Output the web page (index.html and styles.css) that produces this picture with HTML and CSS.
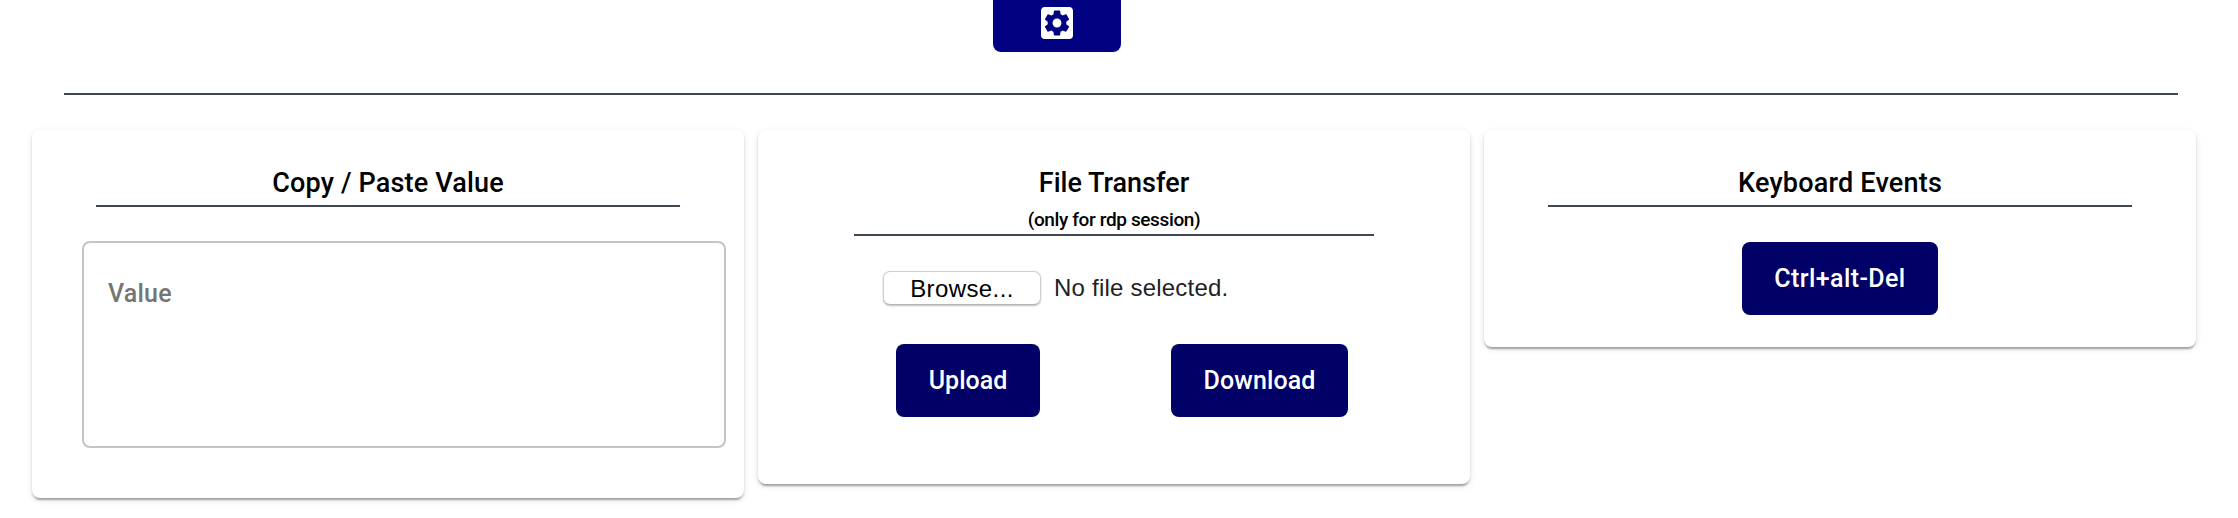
FILE: index.html
```
<!DOCTYPE html>
<html lang="en">
<head>
<meta charset="utf-8">
<title>Remote session</title>
<link rel="stylesheet" href="styles.css">
</head>
<body>
<header class="toolbar">
  <button class="settings" aria-label="Settings">
    <svg viewBox="3 3 18 18" width="32" height="32"><path fill="#fff" d="M12 9.5a2.5 2.5 0 1 0 0 5a2.5 2.5 0 0 0 0-5zm7-6.5H5c-1.11 0-2 .9-2 2v14c0 1.1.89 2 2 2h14c1.11 0 2-.9 2-2V5c0-1.1-.89-2-2-2zm-1.75 9c0 .23-.02.46-.05.68l1.48 1.16c.13.11.17.3.08.45l-1.4 2.42c-.09.15-.27.21-.43.15l-1.74-.7c-.36.28-.76.51-1.18.69l-.26 1.85c-.03.17-.18.3-.35.3h-2.8c-.17 0-.32-.13-.35-.29l-.26-1.85c-.43-.18-.82-.41-1.18-.69l-1.74.7c-.16.06-.34 0-.43-.15l-1.4-2.42c-.09-.15-.05-.34.08-.45l1.48-1.16c-.03-.23-.05-.46-.05-.69 0-.23.02-.46.05-.68l-1.48-1.16c-.13-.11-.17-.3-.08-.45l1.4-2.42c.09-.15.27-.21.43-.15l1.74.7c.36-.28.76-.51 1.18-.69l.26-1.85c.03-.17.18-.3.35-.3h2.8c.17 0 .32.13.35.29l.26 1.85c.43.18.82.41 1.18.69l1.74-.7c.16-.06.34 0 .43.15l1.4 2.42c.09.15.05.34-.08.45l-1.48 1.16c.03.23.05.46.05.69z"/></svg>
  </button>
</header>
<hr class="divider">
<main class="cards">
  <section class="card card-copy">
    <h2 class="title t-copy">Copy / Paste Value</h2>
    <textarea class="value" placeholder="Value"></textarea>
  </section>
  <section class="card card-file">
    <h2 class="title title-file"><span>File Transfer</span><small class="note">(only for rdp session)</small></h2>
    <div class="picker"><button class="browse">Browse...</button><span class="status">No file selected.</span></div>
    <div class="actions"><button class="btn upload">Upload</button><button class="btn download">Download</button></div>
  </section>
  <section class="card card-keys">
    <h2 class="title t-keys">Keyboard Events</h2>
    <button class="btn ctrl">Ctrl+alt-Del</button>
  </section>
</main>
</body>
</html>
```
FILE: styles.css
```
* { box-sizing: border-box; }
body { margin: 0; min-height: 518px; background: #fff; font-family: Roboto, sans-serif; font-weight: 500; color: #000; }
button { border: 0; padding: 0; font: inherit; white-space: nowrap; }
.toolbar { height: 93px; padding-left: 993px; }
.settings { display: flex; justify-content: center; width: 128px; height: 52px; padding-top: 7px; background: #000080; border-radius: 0 0 8px 8px; }
.divider { margin: 0 60px 35px 64px; height: 2px; border: 0; background: #3f4655; }
.cards { display: flex; align-items: flex-start; gap: 14px; padding-left: 32px; }
.card { width: 712px; padding: 32px 64px 0; border-radius: 8px; background: #fff; box-shadow: 0 4px 2px -2px rgba(0,0,0,.2), 0 2px 2px rgba(0,0,0,.14), 0 2px 6px rgba(0,0,0,.12); }
.card-copy { height: 368px; }
.card-file { height: 354px; }
.card-keys { height: 217px; }
.title { margin: 0; height: 45px; border-bottom: 2px solid #3f4655; font-size: 27px; line-height: 42px; font-weight: 500; text-align: center; white-space: nowrap; }
.t-copy { letter-spacing: .17px; }
.t-keys { letter-spacing: .2px; }
.title-file { display: flex; flex-direction: column; align-items: center; height: 74px; margin: 0 32px; }
.note { font-size: 19px; line-height: 31px; font-weight: 500; letter-spacing: -.37px; }
.value { display: block; width: 644px; height: 207px; margin: 34px 0 0 -14px; padding: 34px 24px; border: 2px solid #c4c4c4; border-radius: 8px; resize: none; outline: 0; background: #fff; font: 500 25px/34px Roboto, sans-serif; letter-spacing: .2px; }
.value::placeholder { color: #757575; opacity: 1; }
.picker { display: flex; align-items: center; gap: 13px; margin: 35px 0 0 61px; height: 34px; font: 400 24px/36px "Liberation Sans", sans-serif; }
.browse { width: 158px; height: 34px; background: #fff; border: 1px solid #cfcfcf; border-bottom-color: #b5b5b5; border-radius: 7px; box-shadow: 0 1px 2px rgba(0,0,0,.25); color: #000; letter-spacing: .4px; line-height: 34px; }
.status { color: #222; letter-spacing: .22px; }
.actions { display: flex; justify-content: space-between; margin: 39px 58px 0 74px; }
.btn { display: block; height: 73px; border-radius: 8px; background: #006; color: #fff; font-size: 25px; line-height: 73px; }
.upload { width: 144px; }
.download { width: 177px; letter-spacing: .1px; }
.ctrl { width: 196px; margin: 35px auto 0; letter-spacing: .4px; }
```
